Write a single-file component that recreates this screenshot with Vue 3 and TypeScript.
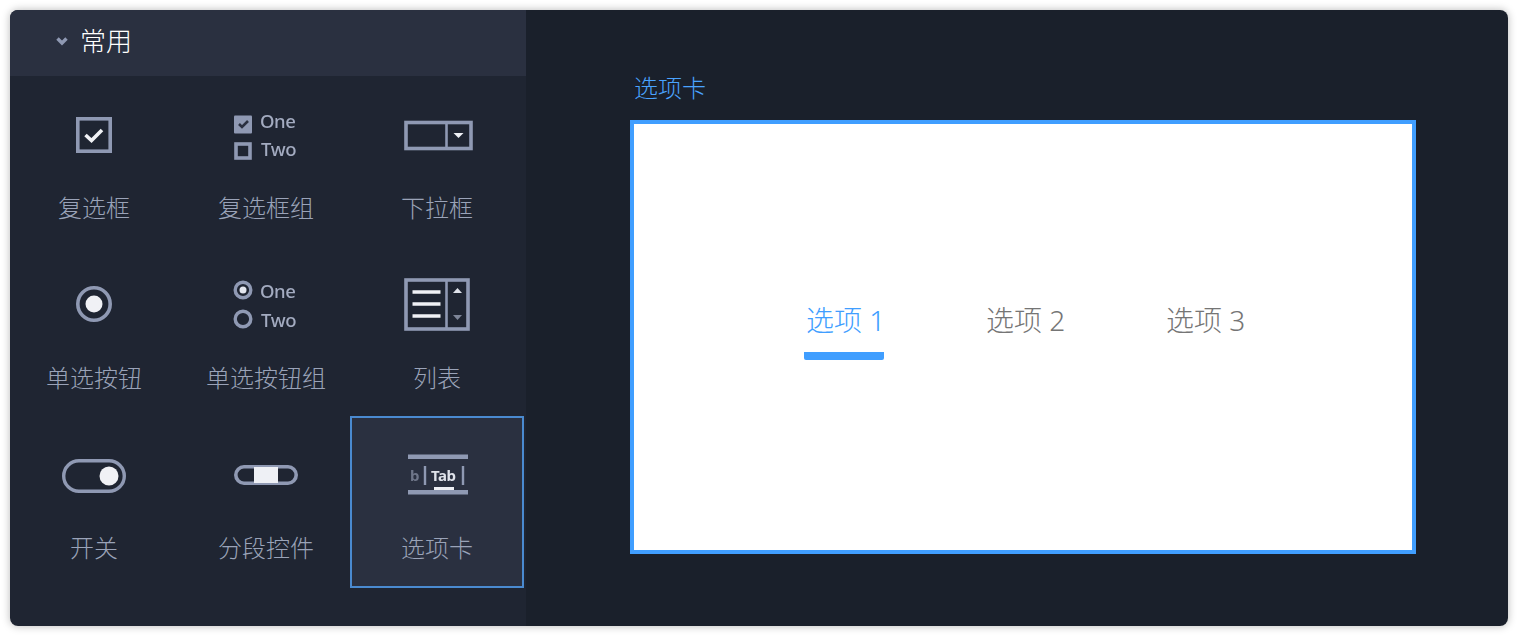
<script setup lang="ts">
import { ref } from 'vue'

interface Widget {
  key: string
  label: string
}

const widgets: Widget[] = [
  { key: 'checkbox', label: '复选框' },
  { key: 'checkbox-group', label: '复选框组' },
  { key: 'select', label: '下拉框' },
  { key: 'radio', label: '单选按钮' },
  { key: 'radio-group', label: '单选按钮组' },
  { key: 'list', label: '列表' },
  { key: 'switch', label: '开关' },
  { key: 'segment', label: '分段控件' },
  { key: 'tabs', label: '选项卡' }
]

const current = ref('tabs')
const tabs = ['选项 1', '选项 2', '选项 3']
const activeTab = ref(0)
</script>

<template>
  <div class="page">
    <div class="window">
      <aside class="sidebar">
        <div class="group-title">
          <svg class="chevron" width="14" height="10" viewBox="0 0 14 10">
            <path d="M2.500 2.500 7 7l4.500-4.500" fill="none" stroke="#8f99b3" stroke-width="3.400" />
          </svg>
          <span>常用</span>
        </div>
        <div class="grid">
          <div
            v-for="w in widgets"
            :key="w.key"
            class="cell"
            :class="{ selected: current === w.key }"
            @click="current = w.key"
          >
            <svg class="icon" width="100" height="70" viewBox="0 0 100 70">
              <template v-if="w.key === 'checkbox'">
                <rect x="33.800" y="18.800" width="32.400" height="32.400" class="line" stroke-width="3.600" />
                <path d="M41.500 35l6 5.500L58 30" class="tick" stroke-width="3.600" />
              </template>
              <template v-else-if="w.key === 'checkbox-group'">
                <rect x="18" y="15.500" width="18" height="18" rx="1" class="fill" />
                <path d="M23 24l3 3 6-6" class="dark-tick" stroke-width="2.600" />
                <rect x="20" y="44" width="14" height="14" class="line" stroke-width="3.600" />
                <text x="44" y="28" class="mini">One</text>
                <text x="45" y="56" class="mini">Two</text>
              </template>
              <template v-else-if="w.key === 'select'">
                <rect x="19" y="22.500" width="65" height="26" class="line" stroke-width="3.600" />
                <path d="M59.500 22v27" class="line" stroke-width="2.600" />
                <path d="M66.500 33h10l-5 5z" fill="#eef0f5" />
              </template>
              <template v-else-if="w.key === 'radio'">
                <circle cx="50" cy="34" r="16.200" class="line" stroke-width="3.600" />
                <circle cx="50" cy="34" r="8.500" fill="#f0f1f5" />
              </template>
              <template v-else-if="w.key === 'radio-group'">
                <circle cx="27" cy="20" r="7.800" class="line" stroke-width="3.400" />
                <circle cx="27" cy="20" r="3.500" fill="#e3e6ee" />
                <circle cx="27" cy="49" r="7.800" class="line" stroke-width="3.400" />
                <text x="44" y="28" class="mini">One</text>
                <text x="45" y="57" class="mini">Two</text>
              </template>
              <template v-else-if="w.key === 'list'">
                <rect x="19" y="10" width="62" height="49" class="line" stroke-width="3.600" />
                <path d="M59.500 9v51" class="line" stroke-width="2.600" />
                <path d="M25.500 22h28M25.500 34h28M25.500 46h28" class="tick" stroke-width="3.600" />
                <path d="M66 23l4.500-5 4.500 5z" fill="#dfe2ea" />
                <path d="M66 45l4.500 5 4.500-5z" fill="#7d8598" />
              </template>
              <template v-else-if="w.key === 'switch'">
                <rect x="19.700" y="20.700" width="60.600" height="30.600" rx="15.300" class="line" stroke-width="3.400" />
                <circle cx="65" cy="36" r="9.500" fill="#f0f1f5" />
              </template>
              <template v-else-if="w.key === 'segment'">
                <rect x="19.800" y="26.800" width="60.400" height="16.400" rx="8.200" class="line" stroke-width="3.600" />
                <rect x="38" y="27" width="24" height="16" fill="#eef0f5" />
              </template>
              <template v-else>
                <rect x="21" y="14.500" width="60" height="4.500" fill="#8f99b3" />
                <rect x="21" y="50" width="60" height="4.500" fill="#8f99b3" />
                <rect x="47" y="47" width="20" height="3" fill="#eef0f5" />
                <path d="M38 26v19M76 26v19" class="line" stroke-width="2.400" />
                <text x="23" y="41" class="tab-dim">b</text>
                <text x="44" y="41" class="tab-on">Tab</text>
              </template>
            </svg>
            <div class="label">{{ w.label }}</div>
          </div>
        </div>
      </aside>

      <main class="stage">
        <div class="stage-title">选项卡</div>
        <div class="canvas">
          <div class="tab-bar">
            <div
              v-for="(t, i) in tabs"
              :key="t"
              class="tab"
              :class="{ active: activeTab === i }"
              @click="activeTab = i"
            >
              {{ t }}
            </div>
          </div>
        </div>
      </main>
    </div>
  </div>
</template>

<style>
html,
body {
  margin: 0;
  background: #fff;
}
</style>

<style scoped>
.page {
  box-sizing: border-box;
  width: 1518px;
  height: 636px;
  padding: 10px;
  font-family: "Noto Sans CJK SC", "Noto Sans", sans-serif;
}

.window {
  display: flex;
  height: 616px;
  border-radius: 8px;
  overflow: hidden;
  box-shadow: 0 0 8px rgba(0, 0, 0, 0.28);
}

.sidebar {
  width: 516px;
  flex: none;
  background: #1f2532;
}

.group-title {
  display: flex;
  align-items: center;
  gap: 11px;
  height: 66px;
  padding: 0 0 8px 45px;
  box-sizing: border-box;
  background: #2a3040;
  color: #fff;
  font-size: 26px;
  font-weight: 300;
}

.chevron {
  margin-top: 4px;
}

.grid {
  display: grid;
  grid-template-columns: 170px 174px 168px;
  grid-auto-rows: 170px;
  margin-left: -1px;
}

.cell {
  box-sizing: border-box;
  display: flex;
  flex-direction: column;
  align-items: center;
  padding-top: 24px;
}

.cell.selected {
  margin: 0 -3px -2px;
  border: 2px solid #4a8ad0;
  padding-top: 22px;
  background: #2a3040;
}

.icon {
  display: block;
  flex: none;
  filter: blur(0.7px);
}

.line {
  fill: none;
  stroke: #8f99b3;
}

.fill {
  fill: #8f99b3;
}

.tick {
  fill: none;
  stroke: #f0f1f5;
}

.dark-tick {
  fill: none;
  stroke: #2a3040;
}

.mini {
  font-family: "Noto Sans", sans-serif;
  font-size: 18.500px;
  font-weight: 500;
  letter-spacing: -0.4px;
  fill: #a3abc0;
}

.tab-dim,
.tab-on {
  font-family: "Noto Sans", sans-serif;
  font-size: 15px;
  font-weight: 700;
}

.tab-dim {
  fill: #6f7689;
}

.tab-on {
  fill: #dfe2ea;
  letter-spacing: -0.5px;
}

.label {
  margin-top: 20px;
  line-height: 34px;
  font-size: 24px;
  font-weight: 300;
  color: #9aa3b8;
}

.stage {
  flex: 1;
  padding: 60px 0 0 104px;
  background: #1a202b;
}

.stage-title {
  height: 36px;
  line-height: 36px;
  margin-top: -1px;
  margin-bottom: 15px;
  padding-left: 4px;
  font-size: 24px;
  font-weight: 300;
  color: #4aa3ff;
}

.canvas {
  box-sizing: border-box;
  width: 786px;
  height: 434px;
  display: flex;
  align-items: center;
  justify-content: center;
  border: 4px solid #409eff;
  background: #fff;
}

.tab-bar {
  display: flex;
  gap: 100px;
  margin-bottom: 12px;
  margin-left: 2px;
}

.tab {
  width: 80px;
  height: 58px;
  line-height: 36px;
  box-sizing: border-box;
  padding-left: 2px;
  white-space: nowrap;
  font-family: "Noto Sans", "Noto Sans CJK SC", sans-serif;
  font-size: 28px;
  font-weight: 300;
  color: #757575;
}

.tab.active {
  color: #409eff;
  border-bottom: 8px solid #409eff;
  border-radius: 0 0 2px 2px;
}
</style>
